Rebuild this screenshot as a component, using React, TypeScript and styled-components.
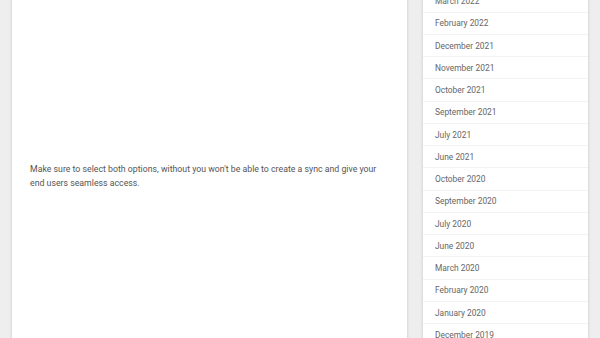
import React from "react";
import styled, { createGlobalStyle } from "styled-components";

const GlobalStyle = createGlobalStyle`
  html, body {
    margin: 0;
    padding: 0;
    background: #eeeeee;
    overflow: hidden;
  }
  body {
    font-family: Roboto, "Liberation Sans", sans-serif;
  }
`;

const Page = styled.div`
  display: flex;
  align-items: flex-start;
  gap: 16px;
  padding-left: 12px;
  height: 338px;
  overflow: hidden;
`;

const Article = styled.main`
  width: 395px;
  height: 400px;
  margin-top: -20px;
  background: #ffffff;
  box-shadow: 0 0 3px rgba(0, 0, 0, 0.18);
  padding: 182px 18px 0;
  box-sizing: border-box;
`;

const Paragraph = styled.p`
  margin: 0;
  font-size: 8.75px;
  line-height: 14px;
  color: #555555;
`;

const Sidebar = styled.aside`
  width: 165px;
  margin-top: -9.6px;
  background: #ffffff;
  box-shadow: 0 0 3px rgba(0, 0, 0, 0.18);
`;

const ArchiveList = styled.ul`
  list-style: none;
  margin: 0;
  padding: 0;
`;

const ArchiveItem = styled.li`
  height: 22.25px;
  box-sizing: border-box;
  display: flex;
  align-items: center;
  padding-left: 12px;
  border-bottom: 1px solid #f3f3f3;
  font-size: 8.4px;
  color: #666666;
`;

const archives = [
  "March 2022",
  "February 2022",
  "December 2021",
  "November 2021",
  "October 2021",
  "September 2021",
  "July 2021",
  "June 2021",
  "October 2020",
  "September 2020",
  "July 2020",
  "June 2020",
  "March 2020",
  "February 2020",
  "January 2020",
  "December 2019",
];

const App: React.FC = () => {
  return (
    <>
      <GlobalStyle />
      <Page>
        <Article>
          <Paragraph>
            Make sure to select both options, without you won't be able to
            create a sync and give your end users seamless access.
          </Paragraph>
        </Article>
        <Sidebar>
          <ArchiveList>
            {archives.map((month) => (
              <ArchiveItem key={month}>{month}</ArchiveItem>
            ))}
          </ArchiveList>
        </Sidebar>
      </Page>
    </>
  );
};

export default App;
